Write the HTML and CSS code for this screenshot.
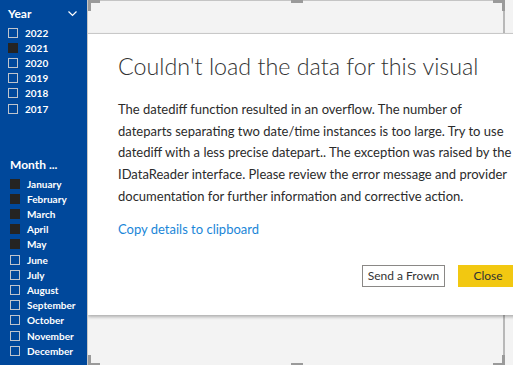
FILE: index.html
```html
<!DOCTYPE html>
<html lang="en">

<head>
  <meta charset="UTF-8">
  <title>Couldn't load the data for this visual</title>
  <link rel="stylesheet" href="styles.css">
</head>

<body>
  <aside class="slicers">
    <section class="slicer year">
      <div class="slicer-head">
        <span>Year</span>
        <svg class="chevron" width="10" height="6" viewBox="0 0 10 6">
          <polyline points="0.5,0.5 4.5,4.5 8.5,0.5" fill="none" stroke="#fff" stroke-width="1.2" />
        </svg>
      </div>
      <ul class="slicer-list">
        <li><span class="box"></span>2022</li>
        <li class="on"><span class="box"></span>2021</li>
        <li><span class="box"></span>2020</li>
        <li><span class="box"></span>2019</li>
        <li><span class="box"></span>2018</li>
        <li><span class="box"></span>2017</li>
      </ul>
    </section>
    <section class="slicer month">
      <div class="slicer-head">
        <span>Month ...</span>
      </div>
      <ul class="slicer-list">
        <li class="on"><span class="box"></span>January</li>
        <li class="on"><span class="box"></span>February</li>
        <li class="on"><span class="box"></span>March</li>
        <li class="on"><span class="box"></span>April</li>
        <li class="on"><span class="box"></span>May</li>
        <li><span class="box"></span>June</li>
        <li><span class="box"></span>July</li>
        <li><span class="box"></span>August</li>
        <li><span class="box"></span>September</li>
        <li><span class="box"></span>October</li>
        <li><span class="box"></span>November</li>
        <li><span class="box"></span>December</li>
      </ul>
    </section>
  </aside>

  <main class="canvas">
    <div class="frame">
      <i class="corner tl"></i>
      <i class="corner tr"></i>
      <i class="corner bl"></i>
      <i class="corner br"></i>
      <i class="handle top"></i>
      <i class="handle bottom"></i>
    </div>

    <div class="dialog">
      <h1>Couldn't load the data for this visual</h1>
      <p class="message">The datediff function resulted in an overflow. The number of dateparts separating two date/time instances is too large. Try to use datediff with a less precise datepart.. The exception was raised by the IDataReader interface. Please review the error message and provider documentation for further information and corrective action.</p>
      <a class="copy">Copy details to clipboard</a>
      <div class="actions">
        <button class="btn frown">Send a Frown</button>
        <button class="btn close">Close</button>
      </div>
    </div>
  </main>
</body>

</html>
```

FILE: styles.css
```css
html,
body {
  margin: 0;
  padding: 0;
  height: 100%;
}

body {
  display: flex;
  overflow: hidden;
  font-family: Lato, "Liberation Sans", sans-serif;
  color: #333;
}

/* slicers */

.slicers {
  width: 87px;
  flex: none;
  background: #00489b;
  color: #fff;
}

.slicer-head {
  height: 16px;
  line-height: 16px;
  display: flex;
  align-items: center;
  justify-content: space-between;
  font-size: 12px;
  font-weight: 700;
  margin-bottom: 3px;
}

.chevron {
  margin-right: 9px;
}

.year {
  padding: 6px 0 0 8px;
}

.month {
  margin-top: 41px;
  padding-left: 10px;
}

.slicer-list {
  list-style: none;
  margin: 0;
  padding: 0;
}

.slicer-list li {
  height: 15.2px;
  display: flex;
  align-items: center;
  font-size: 10px;
  font-weight: 700;
}

.box {
  width: 10px;
  height: 10px;
  box-sizing: border-box;
  border: 1px solid #bfc4cc;
  margin-right: 7px;
}

.on .box {
  background: #252423;
  border-color: #252423;
}

/* canvas */

.canvas {
  flex: 1;
  position: relative;
  background: #f3f3f3;
  border-left: 1px solid #c8c8c8;
  overflow: hidden;
}

.frame {
  position: absolute;
  left: 0;
  top: 0;
  width: 415px;
  height: 365px;
  border-top: 1px solid #c4c4c4;
  border-right: 2px solid #b8b8b8;
}

.corner {
  position: absolute;
  width: 9px;
  height: 8px;
  border: 0 solid #9a9a9a;
}

.corner.tl {
  left: 0;
  top: -1px;
  border-width: 3px 0 0 3px;
}

.corner.tr {
  right: -2px;
  top: -1px;
  border-width: 3px 3px 0 0;
}

.corner.bl {
  left: 0;
  bottom: 0;
  border-width: 0 0 3px 3px;
}

.corner.br {
  right: -2px;
  bottom: 0;
  border-width: 0 3px 3px 0;
}

.handle {
  position: absolute;
  left: 203px;
  width: 12px;
  height: 3px;
  background: #9a9a9a;
}

.handle.top {
  top: -1px;
}

.handle.bottom {
  bottom: 0;
}

/* dialog */

.dialog {
  position: absolute;
  left: 0;
  top: 33px;
  width: 440px;
  height: 282px;
  box-sizing: border-box;
  padding: 16px 0 0 30px;
  background: #fff;
  border-top: 1px solid #c8c8c8;
  box-shadow: 0 2px 3px rgba(0, 0, 0, 0.28);
}

.dialog h1 {
  margin: 0;
  font-size: 23.3px;
  font-weight: 300;
  line-height: 32px;
  color: #333;
}

.message {
  width: 400px;
  margin: 17px 0 0;
  font-size: 13px;
  line-height: 21.7px;
  color: #2b2b2b;
}

.copy {
  display: block;
  margin-top: 13px;
  font-size: 13px;
  color: #1a86d8;
}

.actions {
  display: flex;
  gap: 13px;
  margin: 28px 0 0 244px;
}

.btn {
  height: 22px;
  padding: 0;
  font-family: inherit;
  font-size: 12px;
  color: #333;
  border: 1px solid #8a8886;
  background: #fff;
}

.btn.frown {
  width: 83px;
}

.btn.close {
  width: 60px;
  border-color: #f2c811;
  background: #f2c811;
}
```
